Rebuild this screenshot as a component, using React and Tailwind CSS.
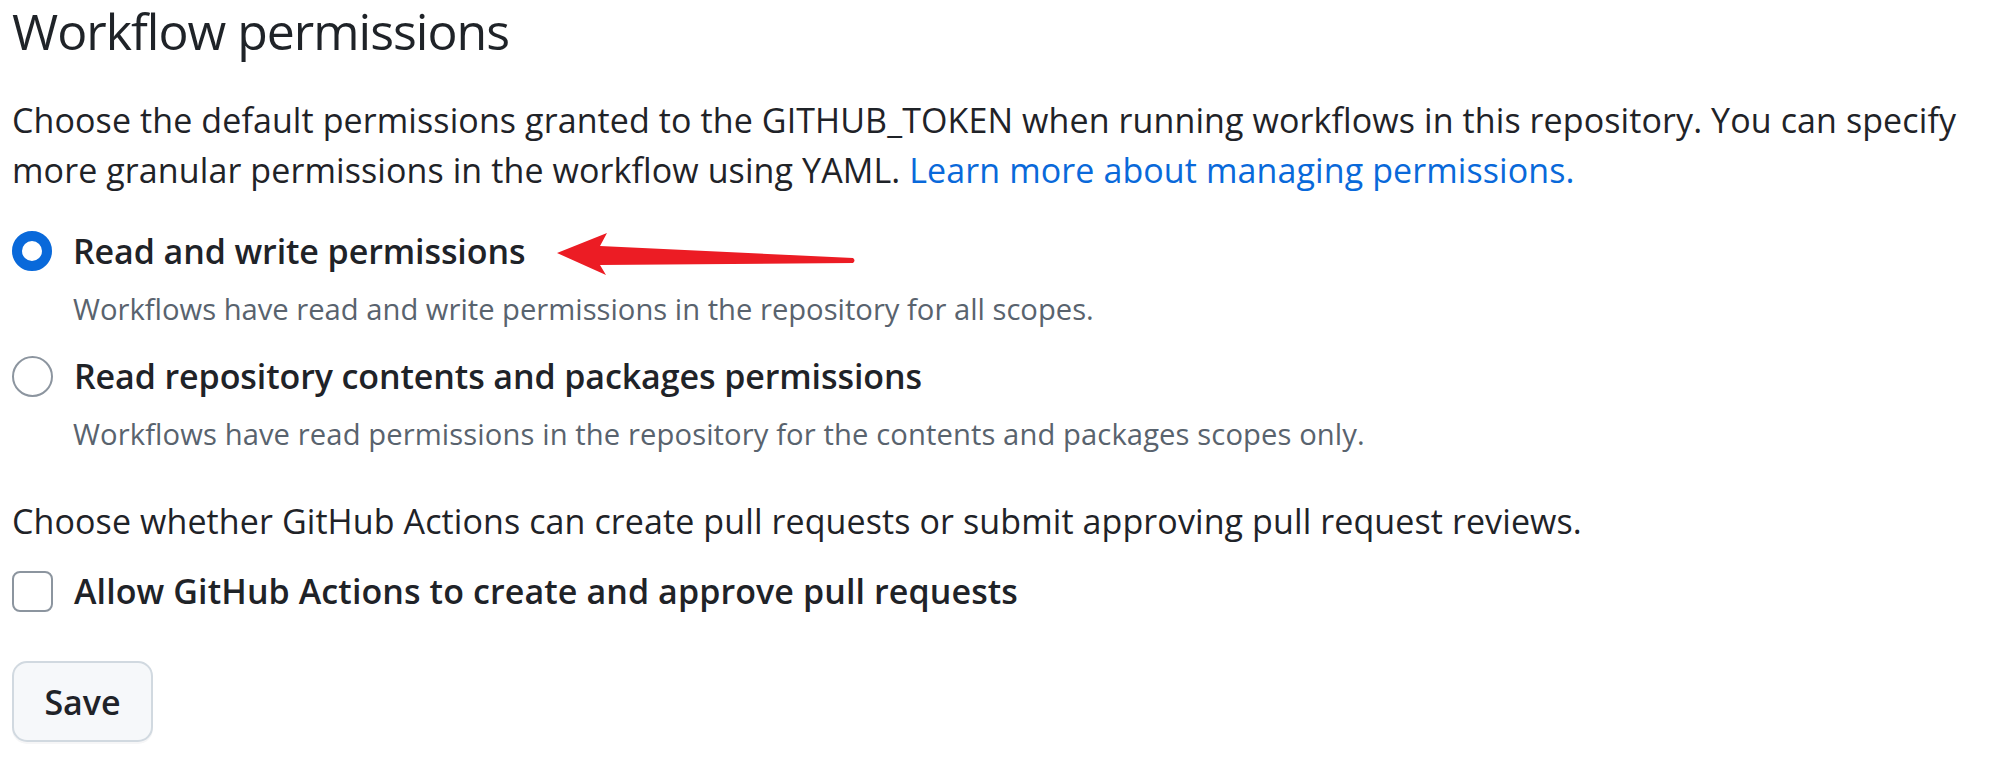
import React from "react";

export default function App() {
  return (
    <div className="relative w-[2000px] h-[758px] overflow-hidden bg-white pl-[12px] text-[#1f2328] [font-family:'Open_Sans','Noto_Sans',sans-serif]">
      <h2 className="text-[50px] leading-[62px] font-normal tracking-[-1px]">Workflow permissions</h2>

      <p className="mt-[33px] text-[34px] leading-[50px] tracking-[0.1px] whitespace-nowrap">
        Choose the default permissions granted to the GITHUB_TOKEN when running workflows in this repository. You can specify
        <br />
        more granular permissions in the workflow using YAML.{" "}
        <a className="text-[#0969da]">Learn more about managing permissions.</a>
      </p>

      <div className="mt-[31px] flex flex-col">
        <div className="flex items-center gap-[21px]">
          <span className="w-[40px] h-[40px] rounded-full border-[10px] border-[#0969da] bg-white shrink-0" />
          <span className="text-[34px] leading-[50px] font-semibold tracking-[-0.1px]">Read and write permissions</span>
        </div>
        <div className="mt-[12px] pl-[61px] text-[29.2px] leading-[43px] text-[#59636e]">
          Workflows have read and write permissions in the repository for all scopes.
        </div>

        <div className="mt-[20px] flex items-center gap-[21px]">
          <span className="w-[41px] h-[41px] rounded-full border-[2.5px] border-[#8c959f] bg-white shrink-0" />
          <span className="text-[34px] leading-[50px] font-semibold tracking-[-0.1px]">Read repository contents and packages permissions</span>
        </div>
        <div className="mt-[12px] pl-[61px] text-[29.2px] leading-[43px] text-[#59636e] tracking-[0.1px]">
          Workflows have read permissions in the repository for the contents and packages scopes only.
        </div>
      </div>

      <p className="mt-[40px] text-[34px] leading-[50px] tracking-[0.1px]">
        Choose whether GitHub Actions can create pull requests or submit approving pull request reviews.
      </p>

      <div className="mt-[20px] flex items-center gap-[21px]">
        <span className="w-[41px] h-[41px] rounded-[8px] border-[2.5px] border-[#8c959f] bg-white shrink-0" />
        <span className="text-[34px] leading-[50px] font-semibold tracking-[0.1px]">Allow GitHub Actions to create and approve pull requests</span>
      </div>

      <button className="mt-[45px] w-[141px] h-[81px] rounded-[15px] border-[2.5px] border-[#d1d9e0] bg-[#f6f8fa] shadow-[0_2px_0_rgba(31,35,40,0.04)] text-[34px] font-semibold leading-[50px] text-[#1f2328] flex items-center justify-center">
        Save
      </button>

      <svg className="absolute left-0 top-0 pointer-events-none" width="2000" height="758" viewBox="0 0 2000 758">
        <path d="M557 253 L607 233 L600 246 L853 258 Q856 260.5 853 263 L600 265 L606 275 Z" fill="#ec1c24" />
      </svg>
    </div>
  );
}
